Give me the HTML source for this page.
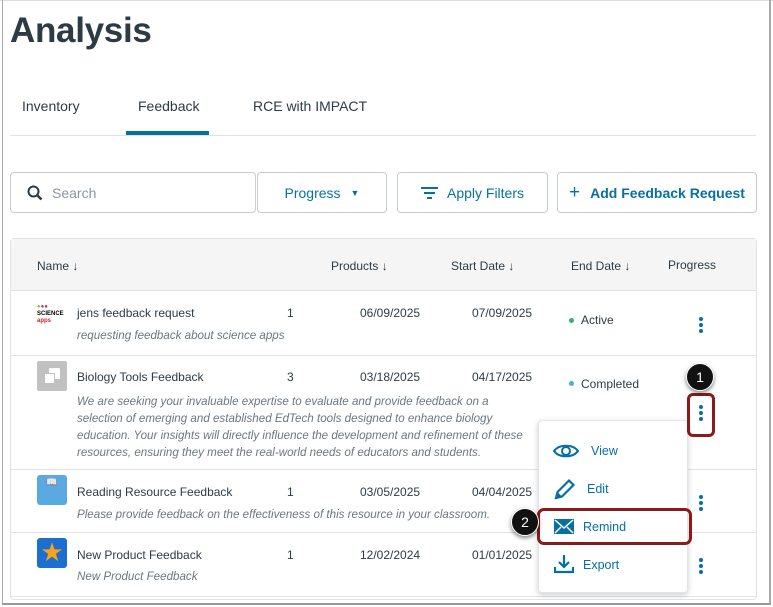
<!DOCTYPE html>
<html><head><meta charset="utf-8"><style>
*{box-sizing:border-box;margin:0;padding:0}
body{width:773px;height:607px;background:#fff;font-family:"Liberation Sans",sans-serif;color:#2d3b45;position:relative;overflow:hidden}
.a{position:absolute}
.t{font-size:12px;white-space:nowrap}
.i{font-style:italic;color:#6b7780;font-size:11.6px}
.btn{position:absolute;border:1px solid #c7cdd1;border-radius:4px;background:#fff;color:#0770a3;font-size:14px;display:flex;align-items:center;justify-content:center}
.dots{position:absolute;width:4px}
.dots i{display:block;width:4px;height:4px;border-radius:2px;background:#0770a3;margin-bottom:2px}
.hr{position:absolute;left:11px;width:745px;height:1px;background:#dfe3e6}
.th{font-size:12px;color:#2d3b45}
.mi{position:absolute;left:0;width:150px;color:#0770a3;font-size:12.5px}
.cal{position:absolute;width:28px;height:28px;border-radius:14px;background:#111;color:#fff;font-size:14px;text-align:center;line-height:26px;box-shadow:0 2px 4px rgba(0,0,0,.5);border:1.5px solid #fff}
</style></head><body>
<div class="a" style="left:0;top:0;width:773px;height:1px;background:#ddd"></div>
<div class="a" style="left:2px;top:0;width:1px;height:604px;background:#aaa"></div>
<div class="a" style="left:769px;top:0;width:2px;height:604px;background:#aaa"></div>
<div class="a" style="left:2px;top:603px;width:769px;height:2px;background:#999"></div>

<div class="a" style="left:10px;top:11px;font-size:35px;font-weight:bold;color:#2d3b45;letter-spacing:-0.3px">Analysis</div>
<div class="a t" style="left:22px;top:98px;font-size:14px">Inventory</div>
<div class="a t" style="left:138px;top:98px;font-size:14px">Feedback</div>
<div class="a t" style="left:253px;top:98px;font-size:14px">RCE with IMPACT</div>
<div class="a" style="left:10px;top:135px;width:746px;height:1px;background:#dfe3e6"></div>
<div class="a" style="left:126px;top:131px;width:83px;height:4px;background:#0770a3"></div>

<div class="btn" style="left:10px;top:172px;width:246px;height:41px;justify-content:flex-start;padding-left:16px;color:#8b969e;font-size:14px">
<svg width="16" height="16" viewBox="0 0 16 16" style="margin-right:9px"><circle cx="6.5" cy="6.5" r="5" fill="none" stroke="#2d3b45" stroke-width="2"/><path d="M10 10l4.5 4.5" stroke="#2d3b45" stroke-width="2.4"/></svg>Search</div>
<div class="btn" style="left:257px;top:172px;width:130px;height:41px">Progress<span style="margin-left:10px;font-size:9px">▼</span></div>
<div class="btn" style="left:397px;top:172px;width:151px;height:41px">
<svg width="17" height="12" viewBox="0 0 17 12" style="margin-right:9px"><path d="M0 1h17M3 6h11M6 11h5" stroke="#0770a3" stroke-width="2"/></svg>Apply Filters</div>
<div class="btn" style="left:557px;top:172px;width:200px;height:41px;font-weight:bold"><span style="font-size:19px;font-weight:normal;margin-right:10px">+</span>Add Feedback Request</div>

<div class="a" style="left:10px;top:238px;width:747px;height:362px;border:1px solid #dfe3e6;border-radius:4px"></div>
<div class="a" style="left:11px;top:239px;width:745px;height:52px;background:#f5f5f5;border-bottom:1px solid #dfe3e6"></div>
<div class="a th" style="left:37px;top:259px">Name ↓</div>
<div class="a th" style="left:331px;top:259px">Products ↓</div>
<div class="a th" style="left:451px;top:259px">Start Date ↓</div>
<div class="a th" style="left:571px;top:259px">End Date ↓</div>
<div class="a th" style="left:668px;top:258px">Progress</div>

<!-- row 1 -->
<div class="a" style="left:37px;top:304px;width:30px;height:20px;font-size:6px;font-weight:bold;line-height:7px"><span style="color:#e8a020">●</span><span style="color:#3366cc">●</span><span style="color:#e23">●</span><br><span style="color:#000">SCIENCE</span><br><span style="color:#d22">apps</span></div>
<div class="a t" style="left:77px;top:306px">jens feedback request</div>
<div class="a i" style="left:77px;top:329px">requesting feedback about science apps</div>
<div class="a t" style="left:287px;top:306px">1</div>
<div class="a t" style="left:360px;top:306px">06/09/2025</div>
<div class="a t" style="left:472px;top:306px">07/09/2025</div>
<div class="a" style="left:569px;top:318px;width:5px;height:5px;border-radius:3px;background:#3cae6f"></div>
<div class="a t" style="left:581px;top:313px">Active</div>
<div class="dots" style="left:699px;top:317px"><i></i><i></i><i></i></div>
<div class="hr" style="top:355px"></div>

<!-- row 2 -->
<div class="a" style="left:37px;top:361px;width:30px;height:30px;background:#c1c1c1;border-radius:2px"><div class="a" style="left:12px;top:7px;width:11px;height:11px;background:#fff;border-radius:1px"></div><div class="a" style="left:7px;top:12px;width:11px;height:11px;background:#fff;border:1px solid #c1c1c1;border-radius:1px"></div></div>
<div class="a t" style="left:77px;top:370px">Biology Tools Feedback</div>
<div class="a i" style="left:77px;top:393px;line-height:17px;white-space:nowrap">We are seeking your invaluable expertise to evaluate and provide feedback on a<br>selection of emerging and established EdTech tools designed to enhance biology<br>education. Your insights will directly influence the development and refinement of these<br>resources, ensuring they meet the real-world needs of educators and students.</div>
<div class="a t" style="left:287px;top:370px">3</div>
<div class="a t" style="left:360px;top:370px">03/18/2025</div>
<div class="a t" style="left:472px;top:370px">04/17/2025</div>
<div class="a" style="left:569px;top:381px;width:5px;height:5px;border-radius:3px;background:#4aaedc"></div>
<div class="a t" style="left:581px;top:377px">Completed</div>
<div class="dots" style="left:699px;top:405px"><i></i><i></i><i></i></div>
<div class="hr" style="top:469px"></div>

<!-- row 3 -->
<div class="a" style="left:37px;top:475px;width:30px;height:30px;background:#5aa9e2;border-radius:3px;color:#dcefff;font-size:9px;text-align:center;line-height:14px">📖</div>
<div class="a t" style="left:77px;top:485px">Reading Resource Feedback</div>
<div class="a i" style="left:77px;top:508px">Please provide feedback on the effectiveness of this resource in your classroom.</div>
<div class="a t" style="left:287px;top:485px">1</div>
<div class="a t" style="left:360px;top:485px">03/05/2025</div>
<div class="a t" style="left:472px;top:485px">04/04/2025</div>
<div class="dots" style="left:699px;top:495px"><i></i><i></i><i></i></div>
<div class="hr" style="top:532px"></div>

<!-- row 4 -->
<div class="a" style="left:37px;top:538px;width:30px;height:30px;background:#1c6fd0;border-radius:3px;color:#f7a318;font-size:26px;line-height:28px;text-align:center">★</div>
<div class="a t" style="left:77px;top:548px">New Product Feedback</div>
<div class="a i" style="left:77px;top:570px">New Product Feedback</div>
<div class="a t" style="left:287px;top:548px">1</div>
<div class="a t" style="left:360px;top:548px">12/02/2024</div>
<div class="a t" style="left:472px;top:548px">01/01/2025</div>
<div class="dots" style="left:699px;top:558px"><i></i><i></i><i></i></div>
<div class="hr" style="top:596px"></div>

<!-- menu -->
<div class="a" style="left:538px;top:420px;width:150px;height:173px;background:#fff;border:1px solid #e3e6e8;border-radius:4px;box-shadow:0 2px 6px rgba(0,0,0,.2)">
<div class="mi" style="top:22px"><svg class="a" style="left:14px;top:0" width="26" height="16" viewBox="0 0 26 16"><path d="M1 8C6 1 20 1 25 8C20 15 6 15 1 8Z" fill="none" stroke="#0770a3" stroke-width="2"/><circle cx="13" cy="8" r="4" fill="none" stroke="#0770a3" stroke-width="2"/></svg><span class="a" style="left:52px;top:1px">View</span></div>
<div class="mi" style="top:60px"><svg class="a" style="left:15px;top:-3px" width="22" height="22" viewBox="0 0 22 22"><path d="M2 20l1.5-6L15 2.5l4.5 4.5L8 18.5z" fill="none" stroke="#0770a3" stroke-width="2.2"/><path d="M2 20l1.5-6 4.5 4.5z" fill="#0770a3"/></svg><span class="a" style="left:48px;top:1px">Edit</span></div>
<div class="mi" style="top:98px"><svg class="a" style="left:15px;top:0" width="20" height="15" viewBox="0 0 20 15"><rect x="0" y="0" width="20" height="15" fill="#0770a3"/><path d="M1 1l9 8 9-8M1 14l6-6M19 14l-6-6" fill="none" stroke="#fff" stroke-width="1.5"/></svg><span class="a" style="left:44px;top:1px">Remind</span></div>
<div class="mi" style="top:136px"><svg class="a" style="left:15px;top:-3px" width="20" height="20" viewBox="0 0 20 20"><path d="M10 1v11M5 8l5 5 5-5" fill="none" stroke="#0770a3" stroke-width="2.2"/><path d="M1 13v5h18v-5" fill="none" stroke="#0770a3" stroke-width="2.2"/></svg><span class="a" style="left:44px;top:1px">Export</span></div>
</div>

<!-- callouts -->
<div class="a" style="left:687px;top:393px;width:28px;height:44px;border:3px solid #8b1a1a;border-radius:6px"></div>
<div class="cal" style="left:686px;top:363px">1</div>
<div class="a" style="left:537px;top:508px;width:155px;height:37px;border:3px solid #8b1a1a;border-radius:7px"></div>
<div class="cal" style="left:511px;top:508px">2</div>
</body></html>
